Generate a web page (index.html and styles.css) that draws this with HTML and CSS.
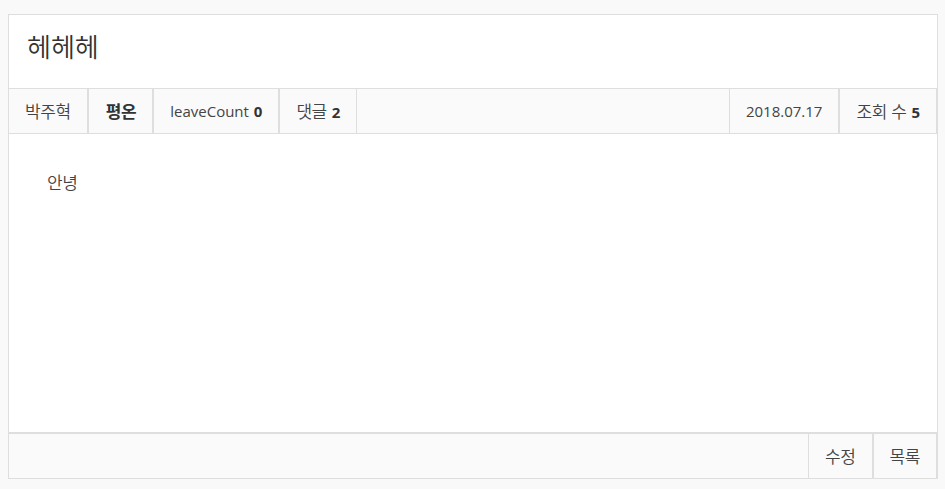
FILE: index.html
```html
<!DOCTYPE html>
<html lang="ko">
<head>
<meta charset="utf-8">
<title>헤헤헤</title>
<link rel="stylesheet" href="styles.css">
</head>
<body>
<div class="page">
  <article class="post">
    <header class="post-head">
      <h1 class="post-title">헤헤헤</h1>
    </header>
    <div class="post-meta">
      <div class="meta-group">
        <span class="meta-cell first"><span class="ko">박주혁</span></span>
        <span class="meta-cell"><b class="ko">평온</b></span>
        <span class="meta-cell">leaveCount <b>0</b></span>
        <span class="meta-cell"><span class="ko">댓글</span> <b>2</b></span>
      </div>
      <div class="meta-group">
        <span class="meta-cell">2018.07.17</span>
        <span class="meta-cell"><span class="ko">조회 수</span> <b>5</b></span>
      </div>
    </div>
    <div class="post-body"><span class="ko">안녕</span></div>
    <footer class="post-foot">
      <a class="foot-btn ko">수정</a>
      <a class="foot-btn ko">목록</a>
    </footer>
  </article>
</div>
</body>
</html>
```

FILE: styles.css
```css
html, body {
  margin: 0;
  padding: 0;
  background: #f9f9f9;
}
body {
  font-family: "Open Sans", "Noto Sans CJK KR", sans-serif;
  font-size: 15px;
  color: #444;
}
.ko {
  font-family: "Noto Sans CJK KR", sans-serif;
  font-size: 17px;
  font-weight: 350;
  letter-spacing: -0.4px;
}
b.ko {
  font-weight: 700;
}
.page {
  padding: 14px 0 0 8px;
}
.post {
  width: 930px;
  box-sizing: border-box;
  border: 1px solid #dedede;
  background: #fff;
}
.post-head {
  height: 74px;
  box-sizing: border-box;
  padding: 13px 18px 0;
  border-bottom: 1px solid #dedede;
}
.post-title {
  margin: 0;
  font-family: "Noto Sans CJK KR", sans-serif;
  font-weight: 350;
  font-size: 26px;
  line-height: 36px;
  color: #333;
}
.post-meta {
  display: flex;
  justify-content: space-between;
  height: 45px;
  box-sizing: border-box;
  background: #fafafa;
  border-bottom: 1px solid #dedede;
}
.meta-group {
  display: flex;
}
.meta-cell {
  display: block;
  line-height: 44px;
  padding: 0 16px;
  border-left: 1px solid #dedede;
  border-right: 1px solid #dedede;
  white-space: nowrap;
}
.meta-cell.first {
  border-left: 0;
}
.meta-cell b {
  color: #333;
  font-weight: 700;
  margin-left: 1px;
}
.post-body {
  height: 300px;
  box-sizing: border-box;
  padding: 36px 38px;
  line-height: 24px;
  color: #444;
  border-bottom: 2px solid #dedede;
}
.post-foot {
  display: flex;
  justify-content: flex-end;
  height: 44px;
  background: #fafafa;
}
.foot-btn {
  display: block;
  line-height: 44px;
  padding: 0 16px;
  border-left: 1px solid #dedede;
  border-right: 1px solid #dedede;
  color: #444;
  cursor: pointer;
}
```
